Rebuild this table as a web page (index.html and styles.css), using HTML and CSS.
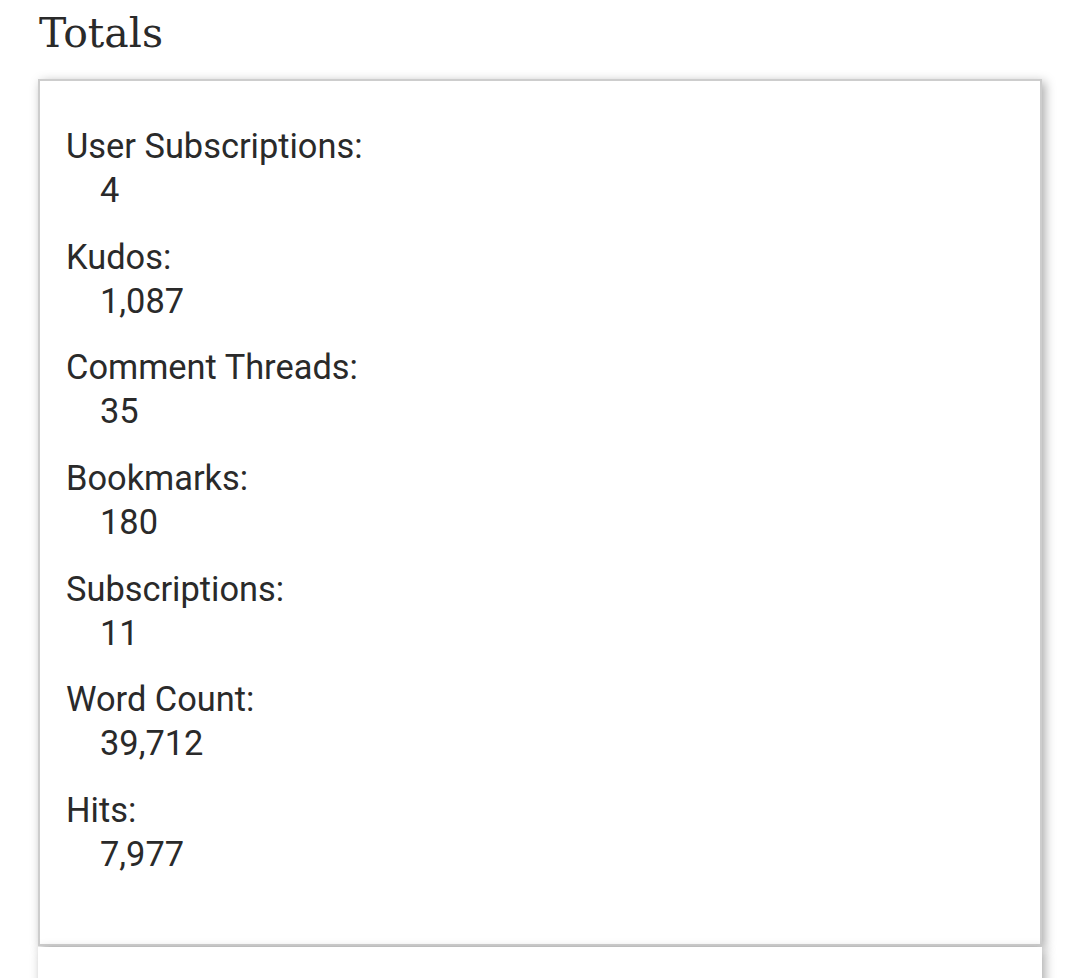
FILE: index.html
```html
<!DOCTYPE html>
<html lang="en">
<head>
<meta charset="utf-8">
<title>Totals</title>
<link rel="stylesheet" href="styles.css">
</head>
<body>
<div class="page">
  <h2 class="heading">Totals</h2>
  <div class="wrapper">
    <dl class="stats">
      <div class="stat"><dt>User Subscriptions:</dt><dd>4</dd></div>
      <div class="stat"><dt>Kudos:</dt><dd>1,087</dd></div>
      <div class="stat"><dt>Comment Threads:</dt><dd>35</dd></div>
      <div class="stat"><dt>Bookmarks:</dt><dd>180</dd></div>
      <div class="stat"><dt>Subscriptions:</dt><dd>11</dd></div>
      <div class="stat"><dt>Word Count:</dt><dd>39,712</dd></div>
      <div class="stat"><dt>Hits:</dt><dd>7,977</dd></div>
    </dl>
  </div>
  <div class="wrapper next"></div>
</div>
</body>
</html>
```
FILE: styles.css
```css
html, body {
  margin: 0;
  padding: 0;
  background: #fff;
}

body {
  font-family: Roboto, "Liberation Sans", sans-serif;
  color: #2a2a2a;
  overflow: hidden;
}

.page {
  padding: 9px 37px 0 38px;
}

.heading {
  margin: 0 0 22px 1px;
  font-family: "DejaVu Serif", serif;
  font-weight: normal;
  font-size: 41px;
  line-height: 48px;
  color: #2a2a2a;
}

.wrapper {
  border: 2px solid #cdcdcd;
  box-shadow: 3px 3px 10px #aaa;
  background: #fff;
}

.stats {
  margin: 0;
  padding: 43px 24px 45px 26px;
  display: flex;
  flex-direction: column;
  gap: 22.7px;
  font-size: 34.4px;
  line-height: 44px;
}

.stat dt {
  margin: 0;
}

.stat dd {
  margin: 0 0 0 34px;
}

.stat:last-child {
  margin-bottom: 23px;
}

.next {
  border: none;
  height: 120px;
  margin-top: 1px;
}
```
